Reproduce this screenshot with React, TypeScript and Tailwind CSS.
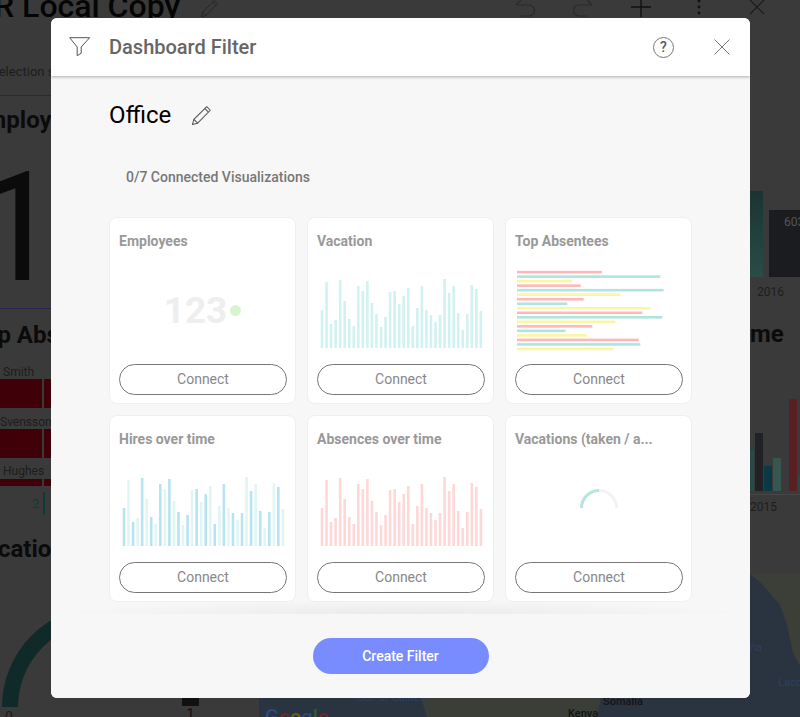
const barHeights = [38, 66, 24, 28, 68, 47, 29, 22, 62, 57, 67, 45, 34, 21, 31, 56, 57, 44, 52, 60, 22, 40, 62, 38, 33, 26, 33, 69, 55, 62, 35, 18, 34, 63, 59, 37];

const listEnds = [276, 451, 186, 212, 461, 331, 221, 172, 421, 397, 457, 316, 247, 167, 231, 386, 391, 311];
const listColors = ["#ffb8b8", "#b0e5df", "#faf6a4"];

const BarChart = ({ color, altColor }: { color: string; altColor?: string }) => (
  <svg width="169" height="114" viewBox="0 0 169 114" className="block blur-[0.3px]">
    {barHeights.map((h, i) => (
      <rect
        key={i}
        x={4.7 + i * 4.54}
        y={98 - h}
        width="2.6"
        height={h}
        fill={altColor && i % 2 === 1 ? altColor : color}
      />
    ))}
  </svg>
);

const ListChart = () => (
  <svg width="169" height="114" viewBox="0 0 169 114" className="block blur-[0.3px]">
    {listEnds.map((end, i) => (
      <rect
        key={i}
        x="3"
        y={20.8 + i * 4.52}
        width={(end - 21) / 3}
        height="2.6"
        fill={listColors[i % 3]}
      />
    ))}
  </svg>
);

const NumberChart = () => (
  <div className="flex h-[114px] items-center justify-center pt-[7px]">
    <span className="text-[37px] leading-none font-bold text-[#eeeeee]">123</span>
    <span className="ml-[3px] h-[11px] w-[11px] rounded-full bg-[#d6f5d0]" />
  </div>
);

const Spinner = () => (
  <div className="flex h-[114px] items-center justify-center">
    <svg width="40" height="40" viewBox="0 0 40 40" fill="none" strokeWidth="3">
      <path d="M20 5.5 A17.5 17.5 0 0 1 37.5 23" stroke="#f3f3f3" />
      <path d="M2.5 23 A17.5 17.5 0 0 1 20 5.5" stroke="#b7e5df" />
    </svg>
  </div>
);

const cards = [
  { title: "Employees", chart: <NumberChart /> },
  { title: "Vacation", chart: <BarChart color="#d0f2f0" /> },
  { title: "Top Absentees", chart: <ListChart /> },
  { title: "Hires over time", chart: <BarChart color="#b7e4f0" altColor="#dff6f5" /> },
  { title: "Absences over time", chart: <BarChart color="#ffd7d7" /> },
  { title: "Vacations (taken / a...", chart: <Spinner /> },
];

const Pencil = ({ size, color }: { size: number; color: string }) => (
  <svg width={size} height={size} viewBox="0 0 22 22" fill="none" stroke={color} strokeWidth="1.1" strokeLinejoin="round">
    <path d="M1.5 20.5 L3 15 L16.5 1.8 L20.2 5.5 L7 19 Z" />
    <path d="M3 15 L7 19 M14.6 3.7 L18.3 7.4" />
  </svg>
);

const Background = () => (
  <div className="flex h-[717px] flex-col">
    <div className="flex h-[18px] shrink-0 items-start">
      <h1 className="-mt-[13px] -ml-[6px] text-[32px] leading-[38px] font-medium whitespace-nowrap text-[#050505]">
        R Local Copy
      </h1>
      <div className="ml-[20px] -mt-[1px]">
        <Pencil size={19} color="#252525" />
      </div>
      <div className="ml-auto -mt-[3px] flex items-start gap-[38px] pr-[33px]">
        <svg width="20" height="20" viewBox="0 0 20 20" fill="none" stroke="#2a2a2a" strokeWidth="1.2">
          <path d="M6 3 L1 8 M1 8 H14 A5.5 5.5 0 0 1 14 19 H6" />
        </svg>
        <svg width="20" height="20" viewBox="0 0 20 20" fill="none" stroke="#2a2a2a" strokeWidth="1.2">
          <path d="M14 3 L19 8 M19 8 H6 A5.5 5.5 0 0 0 6 19 H14" />
        </svg>
        <svg width="20" height="20" viewBox="0 0 20 20" fill="none" stroke="#111111" strokeWidth="1.4">
          <path d="M10 0 V20 M0 10 H20" />
        </svg>
        <svg width="20" height="20" viewBox="0 0 20 20" fill="#111111">
          <circle cx="10" cy="4" r="1.4" />
          <circle cx="10" cy="10" r="1.4" />
          <circle cx="10" cy="16" r="1.4" />
        </svg>
        <svg width="20" height="20" viewBox="0 0 20 20" fill="none" stroke="#1c1c1c" strokeWidth="1.2">
          <path d="M3 3 L17 17 M17 3 L3 17" />
        </svg>
      </div>
    </div>

    <div className="flex h-[699px] min-h-0">
      {/* left column */}
      <div className="flex w-[259px] shrink-0 flex-col overflow-hidden text-[#1d1d1d]">
        <p className="mt-[46px] -ml-[9px] text-[13px] leading-[16px] whitespace-nowrap">Selection s</p>
        <div className="mt-[15px] h-px shrink-0 bg-[#25254f]" />
        <h2 className="mt-[10px] -ml-[28px] text-[24px] leading-[28px] font-bold whitespace-nowrap text-[#0b0b0b]">Employees</h2>
        <div className="mt-[18px] -ml-[25px] text-[152px] leading-[152px] text-[#0b0b0b]">1</div>
        <div className="mt-[4px] h-px shrink-0 bg-[#25254f]" />
        <h2 className="mt-[12px] -ml-[29px] text-[24px] leading-[28px] font-bold whitespace-nowrap text-[#0b0b0b]">Top Absentees</h2>

        <p className="mt-[14px] ml-[3px] h-[16px] shrink-0 text-[12px] leading-[18px]">Smith</p>
        <div className="flex h-[29px] shrink-0 gap-[2px]">
          <div className="w-[42px] bg-[#3f0008]" />
          <div className="w-[60px] bg-[#3f0008]" />
        </div>
        <p className="mt-[5px] h-[16px] shrink-0 text-[12px] leading-[18px]">Svensson</p>
        <div className="flex h-[29px] shrink-0 gap-[2px]">
          <div className="w-[42px] bg-[#3f0008]" />
          <div className="w-[60px] bg-[#3f0008]" />
        </div>
        <p className="mt-[5px] ml-[3px] h-[16px] shrink-0 text-[12px] leading-[16px]">Hughes</p>
        <div className="flex h-[7px] shrink-0 gap-[2px]">
          <div className="w-[42px] bg-[#3f0008]" />
          <div className="w-[60px] bg-[#3f0008]" />
        </div>
        <div className="mt-[6px] flex h-[23px] shrink-0 items-center">
          <span className="ml-[32px] text-[13px] text-[#0f3a36]">2</span>
          <span className="ml-[4px] h-full w-[2px] bg-[#0f3a36]" />
        </div>

        <h2 className="mt-[20px] -ml-[30px] shrink-0 text-[24px] leading-[28px] font-bold whitespace-nowrap text-[#0b0b0b]">Vacations</h2>

        <div className="mt-[37px] flex shrink-0">
          <div className="w-[182px] shrink-0">
            <svg width="120" height="107" viewBox="0 0 120 107" fill="none" className="block">
              <path d="M10 107 A93 93 0 0 1 103 14" stroke="#0f2a28" strokeWidth="16" />
            </svg>
            <p className="ml-[5px] mt-[2px] text-[14px] leading-[16px]">0</p>
          </div>
          <div className="w-[17px] shrink-0 pt-[98px] text-center">
            <div className="h-[8px] bg-[#111111]" />
            <p className="text-[14px] leading-[16px] text-[#111111]">1</p>
          </div>
        </div>
      </div>

      {/* right column */}
      <div className="flex min-h-0 flex-1 flex-col">
        <div className="flex min-h-0 flex-1 justify-end">
          <div className="flex w-[50px] flex-col overflow-hidden text-[#1d1d1d]">
            <div className="mt-[173px] flex h-[86px] items-end gap-[6px]">
              <div className="h-[86px] w-[13px] shrink-0 bg-gradient-to-b from-[#1a3431] to-[#2a4c46]" />
              <div className="h-[67px] w-[40px] shrink-0 bg-[#1a1c20] pt-[5px] pl-[15px] text-[12px] leading-[14px] text-[#555555]">
                603
              </div>
            </div>
            <p className="mt-[7px] ml-[7px] text-[12px] leading-[16px]">2016</p>
            <h2 className="mt-[20px] text-[24px] leading-[28px] font-bold text-[#0b0b0b]">me</h2>
            <svg width="50" height="98" viewBox="0 0 50 98" className="mt-[51px] block shrink-0">
              <rect x="0" y="51" width="4" height="41" fill="#264a45" />
              <rect x="5" y="34" width="8" height="58" fill="#202226" />
              <rect x="14" y="67" width="8" height="25" fill="#0b3a45" />
              <rect x="23" y="59" width="8" height="33" fill="#35574f" />
              <rect x="39" y="0" width="8" height="92" fill="#5a1f24" />
              <rect x="48" y="76" width="2" height="16" fill="#264a45" />
              <rect x="0" y="95" width="50" height="1" fill="#474747" />
            </svg>
            <p className="mt-[2px] text-[12px] leading-[16px]">2015</p>
          </div>
        </div>

        <svg width="541" height="143" viewBox="0 0 541 143" className="block shrink-0">
          <rect width="541" height="143" fill="#2a3340" />
          <path d="M0 0 H491 L501 8 L521 31 L528 51 L534 79 L541 92 V0 Z" fill="#3b3f37" />
          <path d="M162 124 H342 L338 143 H168 Z" fill="#3a3e36" />
          <text x="97" y="127" fontSize="11" fill="#2a4262">Gulf of Guinea</text>
          <text x="491" y="77" fontSize="11" fill="#2f405c">na</text>
          <text x="519" y="112" fontSize="11" fill="#2f405c">Laco</text>
          <text x="344" y="131" fontSize="11" fontWeight="500" fill="#141414">Somalia</text>
          <text x="309" y="143" fontSize="11" fontWeight="500" fill="#141414">Kenya</text>
          <text x="6" y="150" fontSize="20" fontWeight="500" fill="#2d4a7a">
            G<tspan fill="#6b2a26">o</tspan><tspan fill="#6b5a1e">o</tspan>g<tspan fill="#2f5a36">l</tspan><tspan fill="#6b2a26">e</tspan>
          </text>
        </svg>
      </div>
    </div>
  </div>
);

const Modal = () => (
  <div className="absolute top-[18px] left-[51px] flex h-[680px] w-[699px] flex-col overflow-hidden rounded-[6px] bg-[#f7f7f7]">
    <header className="relative z-10 flex h-[58px] shrink-0 items-center bg-white pr-[20px] pl-[18px] shadow-[0_1px_3px_rgba(0,0,0,0.3)]">
      <svg width="22" height="20" viewBox="0 0 22 20" fill="none" stroke="#555555" strokeWidth="1" strokeLinejoin="round">
        <path d="M0.7 0.7 H20.7 L12.2 10 V16.2 L8.2 18.8 V10 Z" />
      </svg>
      <h2 className="ml-[18px] text-[20px] leading-[24px] font-medium text-[#666666]">Dashboard Filter</h2>
      <div className="ml-auto flex items-center gap-[40px]">
        <div className="flex h-[21px] w-[21px] items-center justify-center rounded-full border-[1.3px] border-[#777777] text-[14px] leading-none font-medium text-[#555555]">
          ?
        </div>
        <svg width="16" height="16" viewBox="0 0 16 16" fill="none" stroke="#777777" strokeWidth="1">
          <path d="M0.5 0.5 L15.5 15.5 M15.5 0.5 L0.5 15.5" />
        </svg>
      </div>
    </header>

    <div className="relative flex-1 overflow-hidden pl-[58px]">
      <div className="mt-[25px] flex h-[28px] items-center">
        <span className="text-[24px] leading-[28px] text-black">Office</span>
        <div className="ml-[20px]">
          <Pencil size={21} color="#555555" />
        </div>
      </div>
      <p className="mt-[40px] ml-[17px] text-[14px] leading-[16px] font-medium text-[#777777]">0/7 Connected Visualizations</p>
      <div className="mt-[32px] grid w-[583px] grid-cols-[repeat(3,187px)] gap-[11px]">
        {cards.map((card) => (
          <div key={card.title} className="flex h-[187px] flex-col rounded-[8px] border border-[#efefef] bg-white px-[8px] pt-[16px]">
            <h3 className="ml-[1px] h-[16px] text-[14px] leading-[14px] font-bold whitespace-nowrap text-[#999999]">{card.title}</h3>
            {card.chart}
            <button className="h-[31px] w-[168px] self-end rounded-full border border-[#777777] text-[14px] text-[#888888]">Connect</button>
          </div>
        ))}
      </div>
      <div className="absolute right-0 bottom-0 left-0 h-[14px] bg-[radial-gradient(ellipse_50%_100%_at_50%_100%,rgba(0,0,0,0.05),transparent)]" />
    </div>

    <footer className="flex h-[84px] shrink-0 items-start justify-center bg-[#f7f7f7] pt-[24px]">
      <button className="h-[36px] w-[176px] rounded-full bg-[#788cff] text-[14px] font-medium text-white">Create Filter</button>
    </footer>
  </div>
);

export default function App() {
  return (
    <div className="relative h-[717px] w-[800px] overflow-hidden bg-[#3a3a3a] font-['Roboto',sans-serif]">
      <Background />
      <Modal />
    </div>
  );
}
